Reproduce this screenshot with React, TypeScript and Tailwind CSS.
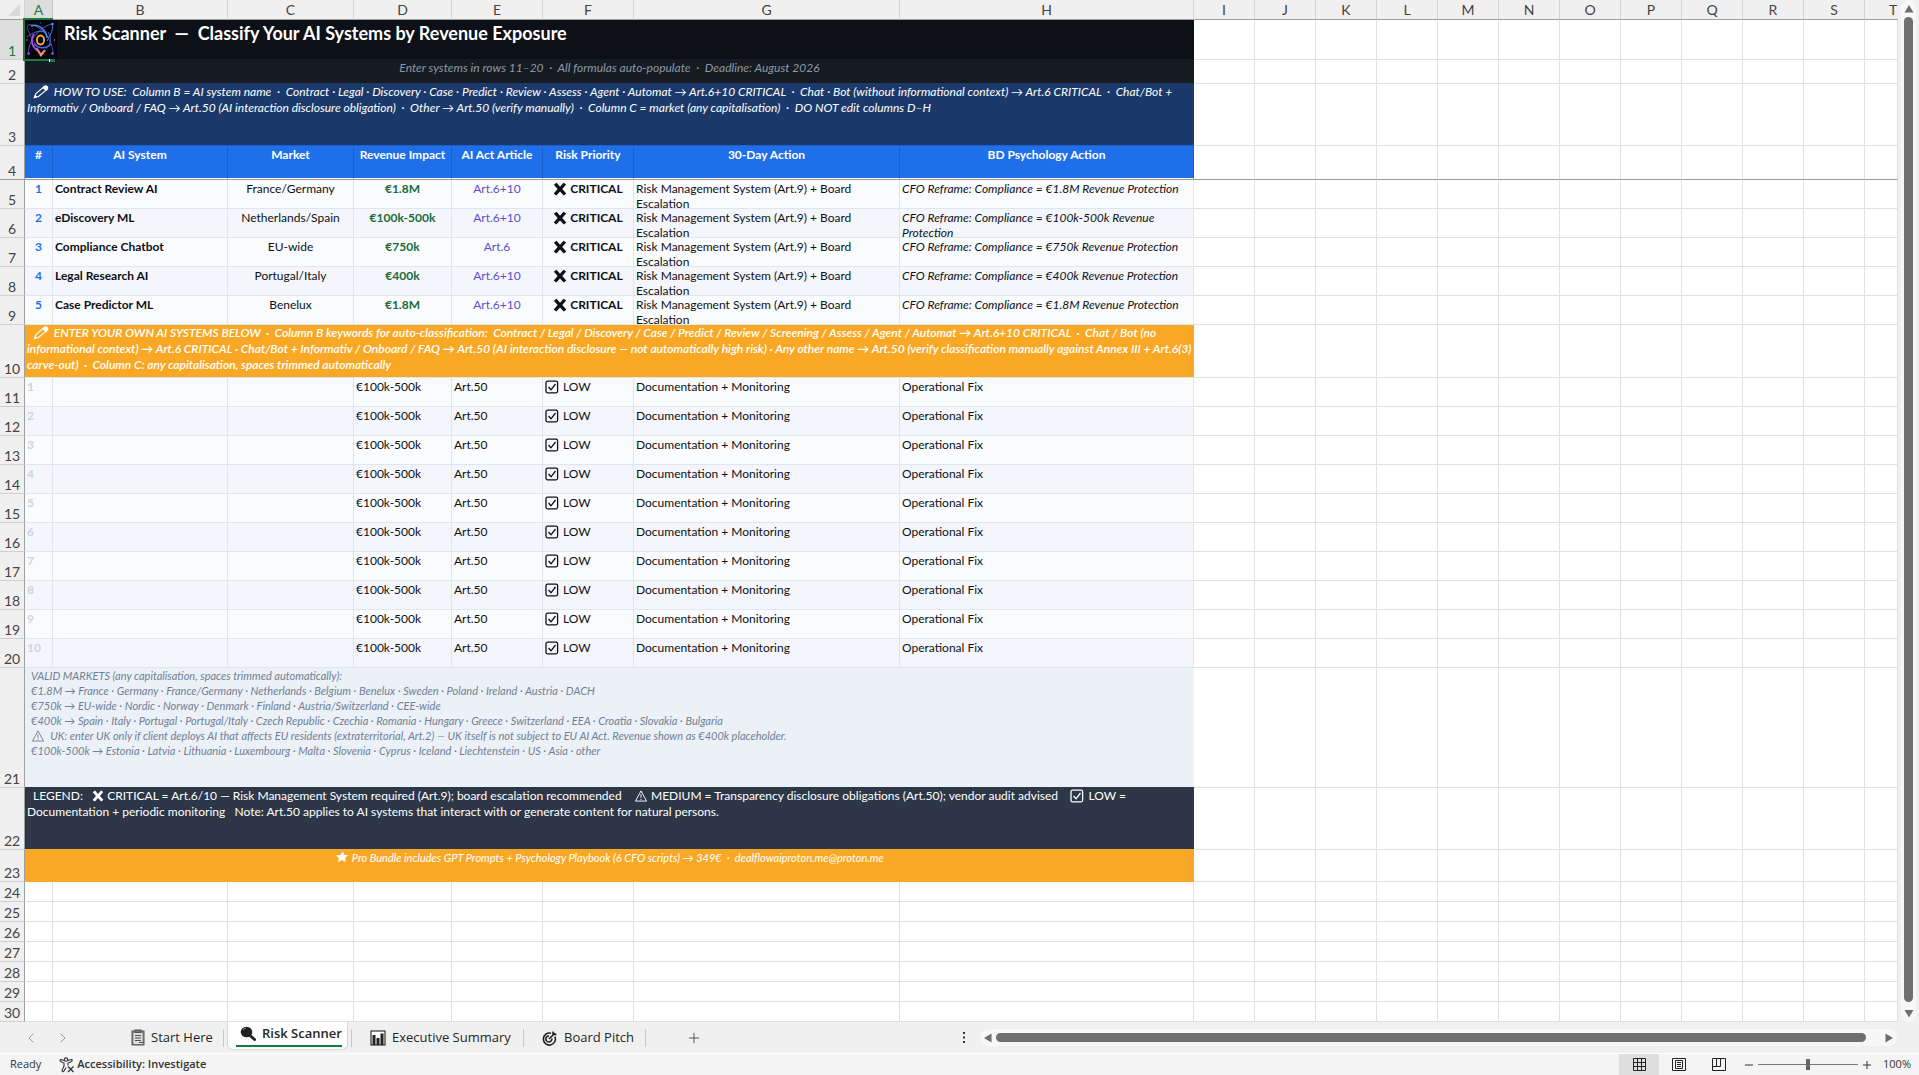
import type { ReactNode } from 'react';
import { clsx } from 'clsx';
import { ChevronLeft, ChevronRight, Plus } from 'lucide-react';

const columns = [
  { name: 'A', width: 'w-[28px]' },
  { name: 'B', width: 'w-[175px]' },
  { name: 'C', width: 'w-[126px]' },
  { name: 'D', width: 'w-[98px]' },
  { name: 'E', width: 'w-[91px]' },
  { name: 'F', width: 'w-[91px]' },
  { name: 'G', width: 'w-[266px]' },
  { name: 'H', width: 'w-[294px]' },
  { name: 'I', width: 'w-[61px]' },
  { name: 'J', width: 'w-[61px]' },
  { name: 'K', width: 'w-[61px]' },
  { name: 'L', width: 'w-[61px]' },
  { name: 'M', width: 'w-[61px]' },
  { name: 'N', width: 'w-[61px]' },
  { name: 'O', width: 'w-[61px]' },
  { name: 'P', width: 'w-[61px]' },
  { name: 'Q', width: 'w-[61px]' },
  { name: 'R', width: 'w-[61px]' },
  { name: 'S', width: 'w-[61px]' },
];

const emptyColumns = ['I', 'J', 'K', 'L', 'M', 'N', 'O', 'P', 'Q', 'R', 'S', 'T'];

const headings = ['#', 'AI System', 'Market', 'Revenue Impact', 'AI Act Article', 'Risk Priority', '30-Day Action', 'BD Psychology Action'];

const systems = [
  { name: 'Contract Review AI', market: 'France/Germany', revenue: '€1.8M', article: 'Art.6+10', reframe: ['CFO Reframe: Compliance = €1.8M Revenue Protection'] },
  { name: 'eDiscovery ML', market: 'Netherlands/Spain', revenue: '€100k-500k', article: 'Art.6+10', reframe: ['CFO Reframe: Compliance = €100k-500k Revenue', 'Protection'] },
  { name: 'Compliance Chatbot', market: 'EU-wide', revenue: '€750k', article: 'Art.6', reframe: ['CFO Reframe: Compliance = €750k Revenue Protection'] },
  { name: 'Legal Research AI', market: 'Portugal/Italy', revenue: '€400k', article: 'Art.6+10', reframe: ['CFO Reframe: Compliance = €400k Revenue Protection'] },
  { name: 'Case Predictor ML', market: 'Benelux', revenue: '€1.8M', article: 'Art.6+10', reframe: ['CFO Reframe: Compliance = €1.8M Revenue Protection'] },
];

const ownRows = [1, 2, 3, 4, 5, 6, 7, 8, 9, 10];
const blankRows = [24, 25, 26, 27, 28, 29, 30];

const PencilIcon = () => (
  <svg viewBox="0 0 16 14" className="mr-0.5 inline-block h-3.5 w-4 align-[-3px]" fill="none" stroke="currentColor" strokeWidth="1.1">
    <path d="M1.5 12.5 3 8.5 11 1.8c1-.8 2-.6 2.800.2s.8 1.800-.2 2.600L5.500 11.500Z" />
    <path d="M10 2.600 13 5.500 14.300 4.200C15 3 14.800 2 14 1.400S12 .8 11.200 1.500Z M1.500 12.500 2.200 10.500 3.500 11.800Z" fill="currentColor" />
  </svg>
);

const CrossIcon = ({ className }: { className: string }) => (
  <svg viewBox="0 0 16 16" className={clsx('inline-block', className)} fill="currentColor">
    <path d="M1 3 4 .8 8 5.300 12 .8 15 2.800 10.600 8 15.200 13 12.300 15.300 8 10.800 3.800 15.300.8 13.200 5.300 8Z" />
  </svg>
);

const CheckIcon = () => (
  <svg viewBox="0 0 14 14" className="mr-px inline-block size-3.5 align-[-3px]" fill="none" stroke="currentColor" strokeWidth="1.300">
    <rect x="1" y="1.200" width="11.600" height="11.600" rx="1.500" />
    <path d="m3.500 7 2.500 2.800 4.500-5.800" />
  </svg>
);

const WarningIcon = () => (
  <svg viewBox="0 0 14 13" className="inline-block h-3 w-3.5 align-[-2px]" fill="none" stroke="currentColor">
    <path d="M7 1 13 12H1ZM7 4.500v4M7 9.500v1.200" />
  </svg>
);

const StarIcon = () => (
  <svg viewBox="0 0 14 13" className="inline-block h-3 w-3.5 align-[-1px]" fill="currentColor">
    <path d="M8 .5 9.300 4 13.500 4.500 10.500 7.300 11 12 7 9.800 2.800 12.300 3.500 8 .5 5 5 4.200Z" />
  </svg>
);

const Logo = () => (
  <svg viewBox="0 0 32 39" className="absolute left-0 top-0 z-20 h-[39px] w-8" fill="none" role="img" aria-label="Logo">
    <defs>
      <linearGradient id="orbit" x1="0" y1="1" x2="1" y2="0">
        <stop offset="0" stopColor="#8b3fd0" />
        <stop offset="0.5" stopColor="#4650c0" />
        <stop offset="1" stopColor="#3aa0f0" />
      </linearGradient>
      <linearGradient id="tip" x1="0" y1="0" x2="0" y2="1">
        <stop offset="0" stopColor="#c060c8" />
        <stop offset="1" stopColor="#ffa050" />
      </linearGradient>
    </defs>
    <rect width="32" height="39" fill="#04040f" />
    <g stroke="url(#orbit)" strokeWidth="1">
      <path d="M3 5C8 3 20 10 24 19s5 14 3 16" stroke="#3c55b8" />
      <path d="M3 5c-2 4 3 13 9 21" stroke="#34459c" />
      <path d="M27 4C20 5 9 14 6 22s-3 10-2 12" stroke="#7a3fc8" />
      <path d="M27 4c2 4-1 10-5 17" stroke="#3b8fe8" />
      <path d="M6 6c7-3 15 3 16 12" stroke="#4f8cf0" strokeWidth="1.500" />
      <path d="M22 14C18 10 11 10 2 17" />
      <path d="M26 24c-5 5-12 5-17 0" stroke="#5964e0" strokeWidth="1.500" />
      <path d="M9 14c-4 6-2 13 4 17" stroke="#a04fd8" strokeWidth="1.800" />
      <path d="M23 12c4 6 3 12-2 17" stroke="#4a58c8" />
    </g>
    <path d="m11.500 28 4.500 7 4-5" stroke="url(#tip)" strokeWidth="2.200" />
    <ellipse cx="15.500" cy="20" rx="3.600" ry="4.500" stroke="#f7b32f" strokeWidth="1.800" />
    <g fill="#9a5be8">
      <circle cx="27.500" cy="4" r="1.200" fill="#39a7f5" />
      <circle cx="3.500" cy="33.500" r="1.200" />
      <circle cx="27.500" cy="33.500" r="1.200" />
      <circle cx="2" cy="20" r=".8" fill="#e05bb0" />
      <circle cx="29.500" cy="20" r=".8" fill="#e05bb0" />
      <circle cx="15.500" cy="3" r=".8" fill="#3c55b8" />
    </g>
  </svg>
);

const ClipboardIcon = () => (
  <svg viewBox="0 0 14 17" className="h-[17px] w-3.5" fill="none" stroke="#555">
    <rect x="1" y="2" width="12" height="14" fill="#8a8a8a" />
    <path d="M2.500 4h9v11h-9z" fill="#ddd" stroke="none" />
    <rect x="4" y="1" width="6" height="2.500" fill="#777" />
    <path d="M4 6.500h6M4 9h6M4 11.500h6M8 13.500h4" strokeWidth="1.200" />
  </svg>
);

const MagnifierIcon = () => (
  <svg viewBox="0 0 16 16" className="size-4" fill="#222">
    <ellipse cx="6.500" cy="6" rx="5.800" ry="5.200" />
    <path d="m9 8.500 5.500 5" stroke="#222" strokeWidth="3" strokeLinecap="round" />
    <path d="M3 4c1-1.500 2-1.800 3-1.800" stroke="#999" fill="none" />
  </svg>
);

const ChartIcon = () => (
  <svg viewBox="0 0 16 16" className="size-4" fill="#222">
    <rect x="1" y="1" width="14" height="14" fill="#fff" stroke="#333" strokeWidth="1.200" />
    <path d="M2.500 5h3v10h-3zM6.500 8h3v7h-3zM10.500 3.500h3V15h-3z" />
  </svg>
);

const TargetIcon = () => (
  <svg viewBox="0 0 16 16" className="size-4" fill="none" stroke="#222" strokeWidth="1.600">
    <path d="M12.800 6.500A6 6 0 1 1 9 3.300" />
    <path d="M9.800 8.500A3 3 0 1 1 7 6" />
    <path d="m7 9 6-6M11 1.500v3h3.500" />
  </svg>
);

const AccessibilityIcon = () => (
  <svg viewBox="0 0 16 16" className="size-4" fill="none" stroke="#333" strokeWidth="1.100">
    <circle cx="7" cy="2.600" r="1.700" />
    <path d="M5.200 3.500 2 2.500c-1.300 0-1.300 1.500-.3 2L5 6v3l-2 4.500c0 1.500 1.500 1.500 2 .5L7 10.500M8.800 3.500l3.500-1c1.200 0 1.200 1.500.2 2L9 6v2.500" />
    <path d="m9 9.500 5.500 5.500M14.500 9.500 9 15" strokeWidth="1.300" />
  </svg>
);

// Unused columns to the right of the scanner
const EmptyCells = ({ frozen = false }: { frozen?: boolean }) => (
  <>
    {emptyColumns.map((c) => (
      <td key={c} className={clsx('border-r border-b', frozen ? 'border-r-[#e0e0e0] border-b-[#9b9b9b]' : 'border-[#e0e0e0]')} />
    ))}
  </>
);

const RowNumber = ({ n, active = false, frozen = false }: { n: number; active?: boolean; frozen?: boolean }) => (
  <th
    scope="row"
    className={clsx(
      'border-r border-b p-0 text-center align-bottom text-[14px] leading-4 font-normal',
      active ? 'bg-[#dedede] text-[#1a7a43] border-r-[#1a7a43]' : 'bg-[#f0f0f0] text-[#444] border-r-[#a0a0a0]',
      frozen ? 'border-b-[#9b9b9b]' : 'border-b-[#d0d0d0]',
    )}
  >
    {n}
  </th>
);

interface BandProps {
  n: number;
  height: string;
  className: string;
  children: ReactNode;
}

const Band = ({ n, height, className, children }: BandProps) => (
  <tr className={height}>
    <RowNumber n={n} />
    <td colSpan={8} className={clsx('border-b px-0.5 py-0 align-top whitespace-pre', className)}>
      {children}
    </td>
    <EmptyCells />
  </tr>
);

interface CellProps {
  shaded: boolean;
  className?: string;
  children?: ReactNode;
}

const Cell = ({ shaded, className, children }: CellProps) => (
  <td className={clsx('border-r border-b border-[#dfe6ee] p-0 align-top', shaded ? 'bg-[#f4f6fb]' : 'bg-[#f9fbfd]')}>
    <div className={clsx('h-7 whitespace-nowrap px-0.5 pt-px leading-[15px]', className)}>{children}</div>
  </td>
);

const Grid = () => (
  <table className="w-full table-fixed border-separate border-spacing-0 text-[12px] leading-4 text-[#0d1117]">
    <colgroup>
      <col className="w-[25px]" />
      {columns.map((c) => (
        <col key={c.name} className={c.width} />
      ))}
      <col />
    </colgroup>
    <thead>
      <tr className="h-5 bg-[#f0f0f0] text-[14px] text-[#444]">
        <td className="border-b border-r border-b-[#a0a0a0] border-r-[#d0d0d0] p-0">
          <svg viewBox="0 0 12 12" className="ml-auto mr-1 size-3" fill="#dadada">
            <path d="M12 0v12H0z" />
          </svg>
        </td>
        {columns.map((c) => (
          <th
            key={c.name}
            scope="col"
            className={clsx(
              'border-b border-r p-0 font-normal leading-[18px]',
              c.name === 'A' ? 'bg-[#dedede] text-[#1a7a43] border-b-[#1a7a43] border-r-[#c4c4c4]' : 'border-b-[#a0a0a0] border-r-[#d4d4d4]',
            )}
          >
            {c.name}
          </th>
        ))}
        <th scope="col" className="border-b border-b-[#a0a0a0] p-0 pl-6 text-left font-normal leading-[18px]">T</th>
      </tr>
    </thead>
    <tbody>
      <tr className="h-10">
        <RowNumber n={1} active />
        <td className="relative border-b border-[#161b22] bg-[#0d1117] p-0">
          <Logo />
          <div className="absolute -left-0.5 -top-0.5 z-10 h-[43px] w-[30px] border-2 border-[#1a7a43]" />
          <div className="absolute left-6 top-[39px] z-10 h-[3px] w-1.5 border-l border-white bg-[#1a7a43]" />
        </td>
        <td colSpan={7} className="border-b border-[#161b22] bg-[#0d1117] p-0 pl-[11px] align-top whitespace-pre text-lg leading-[26px] font-bold text-white">
          Risk Scanner  —  Classify Your AI Systems by Revenue Exposure
        </td>
        <EmptyCells />
      </tr>
      <Band n={2} height="h-6" className="border-[#1b3a6b] bg-[#161b22] text-center italic text-[#8b98a8]">
        Enter systems in rows 11–20  ·  All formulas auto-populate  ·  Deadline: August 2026
      </Band>
      <Band n={3} height="h-[62px]" className="border-[#1a5fcb] bg-[#1b3a6b] italic text-white">
        <div className="pl-1.5">
          <PencilIcon /> HOW TO USE:  Column B = AI system name  ·  Contract · Legal · Discovery · Case · Predict · Review · Assess · Agent · Automat → Art.6+10 CRITICAL  ·  Chat · Bot (without informational context) → Art.6 CRITICAL  ·  Chat/Bot +
        </div>
        <div>Informativ / Onboard / FAQ → Art.50 (AI interaction disclosure obligation)  ·  Other → Art.50 (verify manually)  ·  Column C = market (any capitalisation)  ·  DO NOT edit columns D–H</div>
      </Band>
      <tr>
        <RowNumber n={4} frozen />
        {headings.map((h) => (
          <th key={h} scope="col" className="border-b border-[#9b9b9b] p-0 align-top font-bold text-white">
            <div className="h-[33px] border-r border-b border-r-[#1a5fcb] border-b-white bg-[#1f6feb] pt-px whitespace-nowrap">{h}</div>
          </th>
        ))}
        <EmptyCells frozen />
      </tr>
      {systems.map((s, i) => {
        const shaded = i % 2 === 1;
        return (
          <tr key={s.name}>
            <RowNumber n={i + 5} />
            <Cell shaded={shaded} className="text-center font-bold text-[#1f6feb]">{i + 1}</Cell>
            <Cell shaded={shaded} className="font-bold">{s.name}</Cell>
            <Cell shaded={shaded} className="text-center">{s.market}</Cell>
            <Cell shaded={shaded} className="text-center font-bold text-[#1a6b3c]">{s.revenue}</Cell>
            <Cell shaded={shaded} className="text-center text-[#5b4fcf]">{s.article}</Cell>
            <Cell shaded={shaded} className="text-center font-bold">
              <CrossIcon className="size-3.5 align-[-3px]" /> CRITICAL
            </Cell>
            <Cell shaded={shaded}>
              Risk Management System (Art.9) + Board
              <br />
              Escalation
            </Cell>
            <Cell shaded={shaded} className="italic">
              {s.reframe.map((line) => (
                <div key={line}>{line}</div>
              ))}
            </Cell>
            <EmptyCells />
          </tr>
        );
      })}
      <Band n={10} height="h-[53px]" className="border-[#dfe6ee] bg-[#f9a825] font-semibold italic text-white">
        <div className="pl-1.5">
          <PencilIcon /> ENTER YOUR OWN AI SYSTEMS BELOW  ·  Column B keywords for auto-classification:  Contract / Legal / Discovery / Case / Predict / Review / Screening / Assess / Agent / Automat → Art.6+10 CRITICAL  ·  Chat / Bot (no
        </div>
        <div>informational context) → Art.6 CRITICAL · Chat/Bot + Informativ / Onboard / FAQ → Art.50 (AI interaction disclosure — not automatically high risk) · Any other name → Art.50 (verify classification manually against Annex III + Art.6(3)</div>
        <div>carve-out)  ·  Column C: any capitalisation, spaces trimmed automatically</div>
      </Band>
      {ownRows.map((n) => {
        const shaded = n % 2 === 0;
        return (
          <tr key={n}>
            <RowNumber n={n + 10} />
            <Cell shaded={shaded} className="font-bold text-[#cbd5e0]">{n}</Cell>
            <Cell shaded={shaded} />
            <Cell shaded={shaded} />
            <Cell shaded={shaded}>€100k-500k</Cell>
            <Cell shaded={shaded}>Art.50</Cell>
            <Cell shaded={shaded}>
              <CheckIcon /> LOW
            </Cell>
            <Cell shaded={shaded}>Documentation + Monitoring</Cell>
            <Cell shaded={shaded}>Operational Fix</Cell>
            <EmptyCells />
          </tr>
        );
      })}
      <Band n={21} height="h-[120px]" className="border-[#2d3748] bg-[#ebf1f6] text-[11px] leading-[15px] italic text-[#718096]">
        <div className="pl-1">
          <div>VALID MARKETS (any capitalisation, spaces trimmed automatically):</div>
          <div>€1.8M → France · Germany · France/Germany · Netherlands · Belgium · Benelux · Sweden · Poland · Ireland · Austria · DACH</div>
          <div>€750k → EU-wide · Nordic · Norway · Denmark · Finland · Austria/Switzerland · CEE-wide</div>
          <div>€400k → Spain · Italy · Portugal · Portugal/Italy · Czech Republic · Czechia · Romania · Hungary · Greece · Switzerland · EEA · Croatia · Slovakia · Bulgaria</div>
          <div><WarningIcon />  UK: enter UK only if client deploys AI that affects EU residents (extraterritorial, Art.2) — UK itself is not subject to EU AI Act. Revenue shown as €400k placeholder.</div>
          <div>€100k-500k → Estonia · Latvia · Lithuania · Luxembourg · Malta · Slovenia · Cyprus · Iceland · Liechtenstein · US · Asia · other</div>
        </div>
      </Band>
      <Band n={22} height="h-[62px]" className="border-[#f9a825] bg-[#2d3748] text-white">
        <div className="pl-1.5">
          LEGEND:   <CrossIcon className="size-3 align-[-2px]" /> CRITICAL = Art.6/10 — Risk Management System required (Art.9); board escalation recommended    <WarningIcon /> MEDIUM = Transparency disclosure obligations (Art.50); vendor audit advised    <CheckIcon /> LOW =
        </div>
        <div>Documentation + periodic monitoring   Note: Art.50 applies to AI systems that interact with or generate content for natural persons.</div>
      </Band>
      <Band n={23} height="h-8" className="border-[#f9a825] bg-[#f9a825] text-center text-[11px] italic text-white">
        <StarIcon /> Pro Bundle includes GPT Prompts + Psychology Playbook (6 CFO scripts) → 349€  ·  dealflowaiproton.me@proton.me
      </Band>
      {blankRows.map((n) => (
        <tr key={n} className="h-5">
          <RowNumber n={n} />
          {headings.map((h) => (
            <td key={h} className="border-r border-b border-[#e0e0e0]" />
          ))}
          <EmptyCells />
        </tr>
      ))}
    </tbody>
  </table>
);

const VerticalScrollbar = () => (
  <div className="flex w-[21px] shrink-0 justify-center bg-[#f0f0f0]">
    <div className="flex w-[15px] flex-col items-center rounded-full bg-[#f7f7f7] pt-[5px] pb-1">
      <button type="button" aria-label="Scroll up" className="h-2">
        <svg viewBox="0 0 10 8" className="h-2 w-2.5" fill="#6e6e6e"><path d="M5 0 9.500 7.500h-9z" /></svg>
      </button>
      <div className="my-1 w-[9px] flex-1 rounded-full bg-[#707070]" />
      <button type="button" aria-label="Scroll down" className="mt-1 h-2">
        <svg viewBox="0 0 10 8" className="h-2 w-2.5" fill="#6e6e6e"><path d="M5 7.500.5 0h9z" /></svg>
      </button>
    </div>
  </div>
);

const SheetTabs = () => (
  <div className="flex h-8 shrink-0 items-center border-b border-white bg-[#f0f0f0] text-[13px] text-[#262626]">
    <button type="button" aria-label="Previous sheets" className="ml-[23px] text-[#9a9a9a]"><ChevronLeft size={16} strokeWidth={1.5} /></button>
    <button type="button" aria-label="Next sheets" className="ml-4 text-[#9a9a9a]"><ChevronRight size={16} strokeWidth={1.5} /></button>
    <nav className="ml-[52px] flex h-full items-center whitespace-nowrap" aria-label="Sheets">
      <button type="button" className="flex h-[18px] w-[101px] items-center gap-1.5 border-r border-[#c8c8c8] pl-2"><ClipboardIcon /> Start Here</button>
      <button type="button" className="mx-[3px] flex h-7 w-[121px] items-start self-start rounded-b-md border border-t-0 border-[#d8d8d8] bg-white pl-2 font-semibold">
        <span className="flex h-[25px] items-center gap-1.5 border-b-2 border-[#107c41] pl-1"><MagnifierIcon /> Risk Scanner</span>
      </button>
      <button type="button" className="flex h-[18px] w-[173px] items-center gap-1.5 border-x border-[#c8c8c8] pl-[18px]"><ChartIcon /> Executive Summary</button>
      <button type="button" className="flex h-[18px] w-[122px] items-center gap-1.5 border-r border-[#c8c8c8] pl-[18px]"><TargetIcon /> Board Pitch</button>
    </nav>
    <button type="button" aria-label="New sheet" className="ml-10 text-[#333]"><Plus size={16} strokeWidth={1.2} /></button>
    <div className="ml-auto flex w-1/2 items-center">
      <svg viewBox="0 0 2 11" className="ml-[3px] h-[11px] w-0.5" fill="#333"><path d="M0 0h2v2H0zM0 4.500h2v2H0zM0 9h2v2H0z" /></svg>
      <div className="ml-[15px] mr-[22px] flex h-[17px] flex-1 items-center rounded-full bg-[#f7f7f7] px-1">
        <button type="button" aria-label="Scroll left"><svg viewBox="0 0 8 10" className="h-2.5 w-2" fill="#6e6e6e"><path d="M0 5 7.500.5v9z" /></svg></button>
        <div className="ml-1 mr-[19px] h-[9px] flex-1 rounded-full bg-[#707070]" />
        <button type="button" aria-label="Scroll right"><svg viewBox="0 0 8 10" className="h-2.5 w-2" fill="#6e6e6e"><path d="M8 5 .5.5v9z" /></svg></button>
      </div>
    </div>
  </div>
);

const StatusBar = () => (
  <footer className="flex h-[21px] shrink-0 items-center bg-[#f4f4f4] text-[11px] text-[#333]">
    <span className="ml-2.5">Ready</span>
    <button type="button" className="ml-[18px] flex items-center gap-0.5 font-semibold"><AccessibilityIcon /> Accessibility: Investigate</button>
    <div className="ml-auto flex h-full items-center">
      <button type="button" aria-label="Normal view" aria-pressed="true" className="flex h-full w-10 items-center justify-center bg-[#dedede]">
        <svg viewBox="0 0 13 13" className="size-[13px]" fill="none" stroke="#222"><path d="M.5.5h12v12H.5zM4.500.5v12M8.500.5v12M.5 4.500h12M.5 8.500h12" /></svg>
      </button>
      <button type="button" aria-label="Page layout view" className="flex h-full w-10 items-center justify-center">
        <svg viewBox="0 0 14 13" className="h-[13px] w-3.5" fill="none" stroke="#222"><path d="M.5.5h13v12H.5zM3.500 2.500h7v8h-7zM5 4.500h4M5 6.500h4M5 8.500h4" /></svg>
      </button>
      <button type="button" aria-label="Page break preview" className="flex h-full w-10 items-center justify-center">
        <svg viewBox="0 0 14 13" className="h-[13px] w-3.5" fill="none" stroke="#222"><path d="M.5.5h13v12H.5zM.5 8.500h8v-8M4.500.5v8" /></svg>
      </button>
      <button type="button" aria-label="Zoom out" className="ml-1.5"><svg viewBox="0 0 8 8" className="size-2" stroke="#333"><path d="M0 4h8" /></svg></button>
      <input
        type="range"
        aria-label="Zoom"
        min={0}
        max={200}
        defaultValue={100}
        className="mx-[5px] h-3 w-[100px] appearance-none bg-[linear-gradient(#777,#777)] bg-[length:100%_1px] bg-center bg-no-repeat [&::-webkit-slider-thumb]:h-[11px] [&::-webkit-slider-thumb]:w-1 [&::-webkit-slider-thumb]:appearance-none [&::-webkit-slider-thumb]:bg-[#666]"
      />
      <button type="button" aria-label="Zoom in"><svg viewBox="0 0 8 8" className="size-2" stroke="#333"><path d="M0 4h8M4 0v8" /></svg></button>
      <span className="w-12 pr-2 text-right">100%</span>
    </div>
  </footer>
);

const App = () => {
  return (
    <div className="flex h-screen flex-col overflow-hidden bg-white font-['Open_Sans','Noto_Sans',sans-serif]">
      <main className="flex min-h-0 flex-1">
        <div className="min-w-0 flex-1 overflow-hidden font-['Lato','Noto_Sans',sans-serif]">
          <Grid />
        </div>
        <VerticalScrollbar />
      </main>
      <SheetTabs />
      <StatusBar />
    </div>
  );
};

export default App;
